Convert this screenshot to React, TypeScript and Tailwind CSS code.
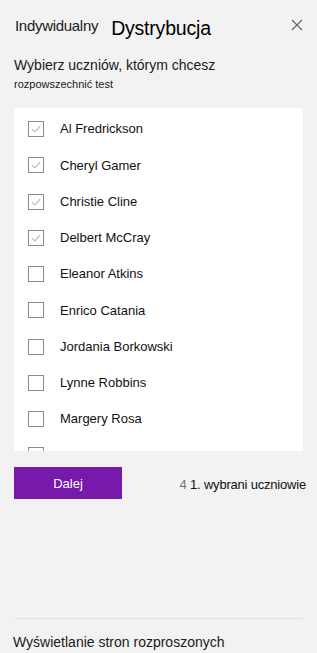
const students = [
  { name: 'Al Fredrickson', checked: true },
  { name: 'Cheryl Gamer', checked: true },
  { name: 'Christie Cline', checked: true },
  { name: 'Delbert McCray', checked: true },
  { name: 'Eleanor Atkins', checked: false },
  { name: 'Enrico Catania', checked: false },
  { name: 'Jordania Borkowski', checked: false },
  { name: 'Lynne Robbins', checked: false },
  { name: 'Margery Rosa', checked: false },
  { name: 'Miriam Graham', checked: false },
]

const Checkbox = ({ checked }: { checked: boolean }) => (
  <div className="w-[16px] h-[16px] border border-[#8a8a8a] bg-white flex items-center justify-center shrink-0">
    {checked && (
      <svg width="12" height="12" viewBox="0 0 12 12" fill="none">
        <path d="M2 6.3 L4.8 9 L10.2 3" stroke="#9a9a9a" strokeWidth="1" />
      </svg>
    )}
  </div>
)

export default function App() {
  return (
    <div className="w-[317px] h-[653px] bg-[#f2f2f2] text-[#1a1a1a] flex flex-col overflow-hidden" style={{ fontFamily: '"Liberation Sans", Arial, sans-serif' }}>
      {/* Header */}
      <div className="flex items-start pl-[15px] pr-[14px] pt-[17px]">
        <span className="text-[15px] leading-[18px] tracking-[-0.3px]">Indywidualny</span>
        <span className="ml-[13px] text-[19.5px] leading-[22px] text-black tracking-[-0.2px]">Dystrybucja</span>
        <button className="ml-auto mt-[2px] text-[#666]">
          <svg width="12" height="12" viewBox="0 0 12 12">
            <path d="M1 1 L11 11 M11 1 L1 11" stroke="#666" strokeWidth="1.2" />
          </svg>
        </button>
      </div>

      <div className="px-[14px] mt-[17px]">
        <div className="text-[14px] leading-[18px]">Wybierz uczniów, którym chcesz</div>
        <div className="text-[11px] leading-[16px] mt-[2px]">rozpowszechnić test</div>
      </div>

      {/* Student list */}
      <div className="mx-[14px] mt-[16px] h-[343px] bg-white overflow-hidden pt-[3px]">
        {students.map((s, i) => (
          <div key={i} className="h-[36.25px] flex items-center pl-[14px]">
            <Checkbox checked={s.checked} />
            <span className="ml-[16px] text-[13px] text-[#111]">{s.name}</span>
          </div>
        ))}
      </div>

      {/* Actions */}
      <div className="flex items-center px-[14px] mt-[16px]">
        <button className="w-[108px] h-[32px] bg-[#7719aa] text-white text-[13px] pt-[2px]">Dalej</button>
        <div className="ml-auto mr-[-3px] text-[13px] mt-[3px] tracking-[-0.2px]">
          <span className="text-[#777]">4</span> <span className="text-[#111]">1. wybrani uczniowie</span>
        </div>
      </div>

      {/* Footer */}
      <div className="mt-auto mx-[14px] border-t border-[#e1e1e1] pt-[14px] pb-[2px]">
        <div className="text-[14px] leading-[18px] -ml-[1px]">Wyświetlanie stron rozproszonych</div>
      </div>
    </div>
  )
}
